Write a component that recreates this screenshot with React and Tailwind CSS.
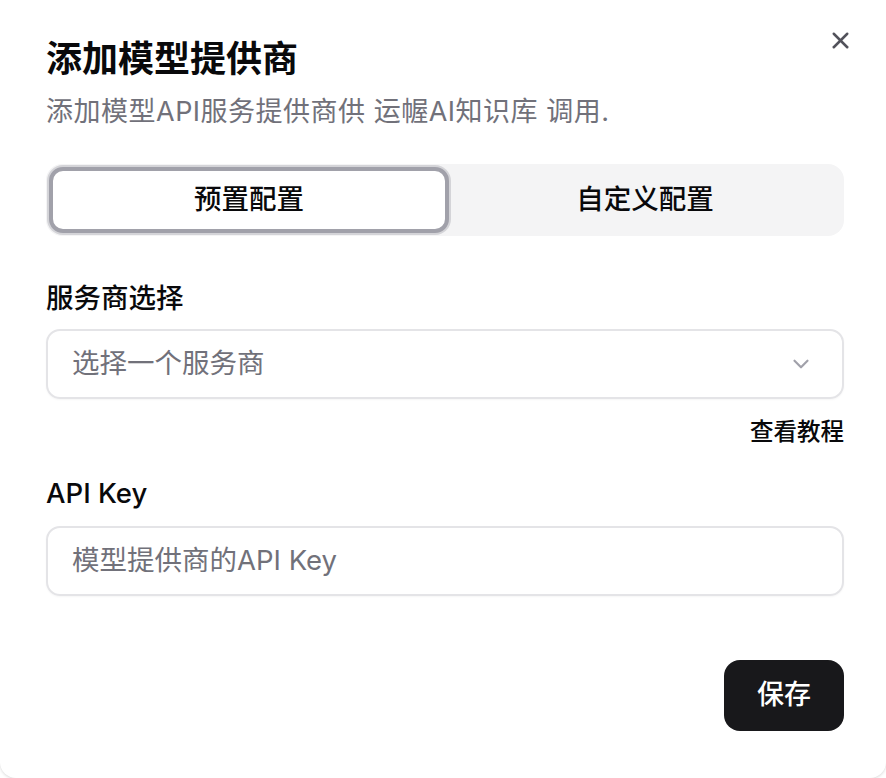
import { X, ChevronDown } from "lucide-react";

function App() {
  const font = { fontFamily: '"Inter", "Noto Sans CJK SC", sans-serif' };

  return (
    <div className="w-[886px] h-[778px] bg-white" style={font}>
      <div className="relative w-full h-full bg-white rounded-b-[16px] shadow-[0_1px_3px_rgba(0,0,0,0.15)] pl-[46px] pr-[42px] pt-[36px] flex flex-col">
        <button className="absolute right-[32px] top-[27px] text-[#52525b]">
          <X size={27} strokeWidth={2.2} />
        </button>

        <h2 className="text-[36px] leading-[46px] font-semibold text-[#09090b]">添加模型提供商</h2>
        <p className="mt-[12px] text-[27px] leading-[36px] tracking-[0.5px] text-[#71717a]">添加模型API服务提供商供 运幄AI知识库 调用.</p>

        <div className="mt-[34px] h-[72px] bg-[#f4f4f5] rounded-[16px] p-[3px] flex">
          <div className="flex-1 bg-white rounded-[14px] border-[4px] border-[#a1a1aa] ring-2 ring-[#d4d4d8] flex items-center justify-center text-[27.5px] font-medium text-[#09090b]">
            预置配置
          </div>
          <div className="flex-1 flex items-center justify-center text-[27.5px] font-medium text-[#09090b]">
            自定义配置
          </div>
        </div>

        <label className="mt-[44px] text-[27.5px] leading-[36px] font-medium text-[#09090b]">服务商选择</label>
        <div className="mt-[13px] h-[70px] border-2 border-[#e4e4e7] rounded-[14px] flex items-center justify-between pl-[24px] pr-[28px] shadow-[0_1px_2px_rgba(0,0,0,0.04)]">
          <span className="text-[27.5px] text-[#71717a]">选择一个服务商</span>
          <ChevronDown size={26} strokeWidth={2} className="text-[#a1a1aa]" />
        </div>
        <div className="mt-[18px] flex justify-end">
          <span className="text-[23.5px] leading-[30px] font-medium text-[#09090b]">查看教程</span>
        </div>

        <label className="mt-[28px] text-[27.5px] leading-[36px] font-medium text-[#09090b]">API Key</label>
        <div className="mt-[15px] h-[70px] border-2 border-[#e4e4e7] rounded-[14px] flex items-center pl-[24px] shadow-[0_1px_2px_rgba(0,0,0,0.04)]">
          <span className="text-[27.5px] text-[#71717a]">模型提供商的API Key</span>
        </div>

        <div className="mt-[64px] flex justify-end">
          <button className="w-[120px] h-[71px] bg-[#18181b] rounded-[16px] text-white text-[27px] font-medium">保存</button>
        </div>
      </div>
    </div>
  );
}

export default App;
